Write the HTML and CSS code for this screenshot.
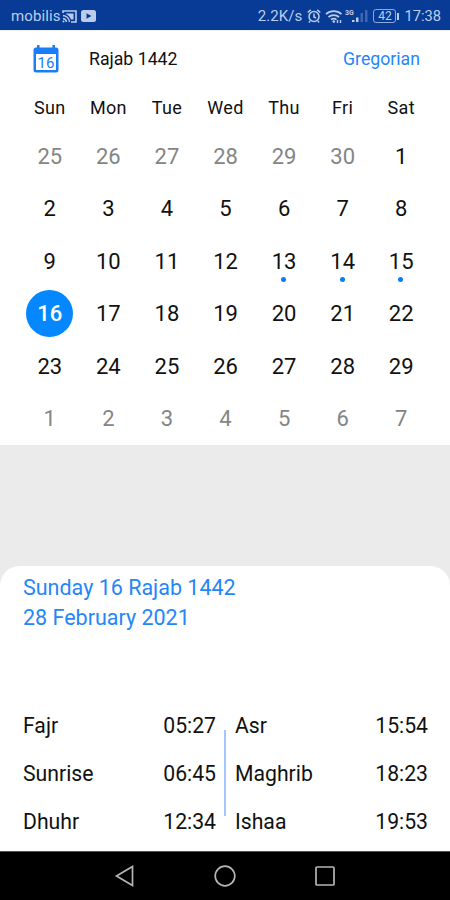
FILE: index.html
```html
<!DOCTYPE html>
<html lang="en">
<head>
    <meta charset="UTF-8">
    <meta name="viewport" content="width=device-width, initial-scale=1.0">
    <title>Calendar</title>
    <link rel="stylesheet" href="styles.css">
</head>
<body>
    <!-- Status bar -->
    <div class="status-bar">
        <span class="carrier">mobilis</span>
        <svg class="icon-cast" width="15" height="13" viewBox="0 0 15 13" fill="none" stroke="currentColor">
            <path d="M1 3V1h13v11H9" stroke-width="1.6"/>
            <path d="M4 3.5h7.5v6H9C8 7 6.500 5 4 4z" fill="currentColor" stroke="none"/>
            <path d="M1 5.500a7 7 0 0 1 6.500 6.500M1 8.500a4 4 0 0 1 3.500 3.500" stroke-width="1.4"/>
            <circle cx="1.500" cy="11.500" r="1" fill="currentColor" stroke="none"/>
        </svg>
        <svg class="icon-video" width="15" height="12" viewBox="0 0 15 12">
            <rect width="15" height="12" rx="2.500" fill="currentColor"/>
            <path d="M5.500 3.200v5.600L10.500 6z" fill="#073b96"/>
        </svg>
        <div class="status-right">
            <span class="speed">2.2K/s</span>
            <svg class="icon-alarm" width="14" height="14" viewBox="0 0 14 14" fill="none" stroke="currentColor" stroke-width="1.500">
                <circle cx="7" cy="7.500" r="5"/>
                <path d="M7 4.500V8l2 1M.7 3.500L3.800.9M13.300 3.500L10.200.9M3 12l-1 1.500M11 12l1 1.500"/>
            </svg>
            <svg class="icon-wifi" width="18" height="15" viewBox="0 0 18 15" fill="none" stroke="currentColor" stroke-width="1.700">
                <path d="M1 5.200a11.500 11.500 0 0 1 15.500 0M3.500 8a8 8 0 0 1 10.500 0M6 10.600a4.500 4.500 0 0 1 5.500 0"/>
                <circle cx="8.800" cy="12.600" r="1.300" fill="currentColor" stroke="none"/>
                <path d="M12.500 11v3M15.500 11v3" stroke-width="1.400"/>
            </svg>
            <svg class="icon-signal" width="23" height="16" viewBox="0 0 23 16" fill="currentColor">
                <text x="0" y="7" class="network">3G</text>
                <path d="M7 12h2.500v2H7zM11 9.500h2.500V14H11z"/>
                <path d="M15.500 5H18v9h-2.500zM20 2h2.500v12H20z" opacity=".3"/>
            </svg>
            <span class="battery">42</span>
            <span class="clock">17:38</span>
        </div>
    </div>

    <!-- Calendar -->
    <div class="calendar">
        <div class="calendar-header">
            <svg class="icon-calendar" width="26" height="28" viewBox="0 0 26 28">
                <path d="M3 2.500h20A2.500 2.500 0 0 1 25.500 5v20a2.500 2.500 0 0 1-2.500 2.500H3A2.500 2.500 0 0 1 .5 25V5A2.500 2.500 0 0 1 3 2.500zM3 9v16h20V9z" fill="currentColor" fill-rule="evenodd"/>
                <path d="M4 0h2.500v4H4zM19.500 0H22v4h-2.500z" fill="currentColor"/>
                <text x="13" y="22.500" class="icon-day">16</text>
            </svg>
            <span class="month">Rajab 1442</span>
            <span class="mode">Gregorian</span>
        </div>
        <div class="weekdays">
            <span>Sun</span><span>Mon</span><span>Tue</span><span>Wed</span><span>Thu</span><span>Fri</span><span>Sat</span>
        </div>
        <div class="days">
            <span class="other">25</span><span class="other">26</span><span class="other">27</span><span class="other">28</span><span class="other">29</span><span class="other">30</span><span>1</span>
            <span>2</span><span>3</span><span>4</span><span>5</span><span>6</span><span>7</span><span>8</span>
            <span>9</span><span>10</span><span>11</span><span>12</span><span class="event">13</span><span class="event">14</span><span class="event">15</span>
            <span class="selected">16</span><span>17</span><span>18</span><span>19</span><span>20</span><span>21</span><span>22</span>
            <span>23</span><span>24</span><span>25</span><span>26</span><span>27</span><span>28</span><span>29</span>
            <span class="other">1</span><span class="other">2</span><span class="other">3</span><span class="other">4</span><span class="other">5</span><span class="other">6</span><span class="other">7</span>
        </div>
    </div>

    <!-- Prayer times -->
    <div class="sheet">
        <div class="date">Sunday 16 Rajab 1442</div>
        <div class="date">28 February 2021</div>
        <div class="times">
            <div class="times-col">
                <div class="time"><span>Fajr</span><span>05:27</span></div>
                <div class="time"><span>Sunrise</span><span>06:45</span></div>
                <div class="time"><span>Dhuhr</span><span>12:34</span></div>
            </div>
            <div class="divider"></div>
            <div class="times-col">
                <div class="time"><span>Asr</span><span>15:54</span></div>
                <div class="time"><span>Maghrib</span><span>18:23</span></div>
                <div class="time"><span>Ishaa</span><span>19:53</span></div>
            </div>
        </div>
    </div>

    <!-- Navigation bar -->
    <div class="nav-bar">
        <svg width="22" height="22" viewBox="0 0 22 22"><path d="M2.500 11L18.500 1.500v19z"/></svg>
        <svg width="22" height="22" viewBox="0 0 22 22"><circle cx="11" cy="11" r="9.800"/></svg>
        <svg width="22" height="22" viewBox="0 0 22 22"><rect x="2" y="2" width="18" height="18" rx="1"/></svg>
    </div>
</body>
</html>
```
FILE: styles.css
```css
* {
    box-sizing: border-box;
}
body {
    font-family: Roboto, sans-serif;
    margin: 0;
    height: 900px;
    display: flex;
    flex-direction: column;
    background-color: #ebebeb;
    color: #111;
    overflow: hidden;
}
svg {
    display: block;
    flex: none;
}
.status-bar {
    height: 30px;
    padding: 2px 9px 0 11px;
    display: flex;
    align-items: center;
    background: #073b96;
    color: #bccdea;
    font-size: 15px;
}
.carrier {
    width: 51px;
    letter-spacing: 0.1px;
}
.icon-video {
    margin-left: 4px;
}
.status-right {
    margin-left: auto;
    display: flex;
    align-items: center;
}
.speed {
    letter-spacing: 0.1px;
}
.icon-alarm {
    margin-left: 5px;
}
.icon-wifi {
    margin-left: 4px;
}
.icon-signal {
    margin-left: 2px;
}
.network {
    font-size: 7px;
    font-weight: bold;
}
.battery {
    position: relative;
    width: 23px;
    height: 14px;
    margin: 0 8px 0 5px;
    border: 1px solid #8da7d6;
    border-radius: 3px;
    font-size: 12px;
    line-height: 12px;
    text-align: center;
}
.battery::after {
    content: "";
    position: absolute;
    right: -4px;
    top: 3px;
    width: 2px;
    height: 7px;
    background: #bccdea;
}
.clock {
    font-size: 14.7px;
}
.calendar {
    height: 415px;
    background: white;
    border-top: 1px solid #f0f2f8;
}
.calendar-header {
    height: 56px;
    padding: 0 30px 0 33px;
    display: flex;
    align-items: center;
    font-size: 17.7px;
}
.icon-calendar {
    color: #1a7dfa;
}
.icon-day {
    font-size: 15px;
    fill: #1a7dfa;
    text-anchor: middle;
}
.month {
    margin-left: 30px;
}
.mode {
    margin-left: auto;
    color: #2585fb;
}
.weekdays, .days {
    width: 410px;
    margin-left: 20.5px;
    display: grid;
    grid-template-columns: repeat(7, 1fr);
    text-align: center;
}
.weekdays {
    height: 43px;
    font-size: 18px;
    line-height: 42px;
    letter-spacing: 0.3px;
}
.days {
    grid-auto-rows: 52.4px;
    font-size: 22px;
    line-height: 53px;
}
.days span {
    position: relative;
}
.days .other {
    color: #858585;
}
.days .selected {
    width: 47px;
    height: 47px;
    place-self: center;
    border-radius: 50%;
    background: #0588ff;
    color: white;
    line-height: 48px;
    font-weight: 500;
}
.days .event::after {
    content: "";
    position: absolute;
    left: 50%;
    top: 42px;
    width: 5px;
    height: 5px;
    margin-left: -3px;
    border-radius: 50%;
    background: #0a7df5;
}
.sheet {
    height: 285px;
    margin-top: 121px;
    padding: 6px 22px 0 23px;
    border-radius: 20px 20px 0 0;
    background: white;
}
.date {
    height: 30px;
    font-size: 21.5px;
    line-height: 31px;
    color: #2486f8;
}
.times {
    margin-top: 70px;
    display: flex;
    font-size: 21.2px;
}
.times-col {
    width: 193px;
}
.time {
    height: 48px;
    display: flex;
    justify-content: space-between;
    line-height: 48px;
}
.divider {
    width: 2px;
    height: 86px;
    margin: 28px 9px 0 8px;
    background: #a3c7fd;
}
.nav-bar {
    height: 49px;
    padding: 0 114px;
    display: flex;
    align-items: center;
    justify-content: space-between;
    background: black;
    border-top: 1px solid #555;
}
.nav-bar svg {
    fill: none;
    stroke: #b5b5b5;
    stroke-width: 1.7;
}
```
